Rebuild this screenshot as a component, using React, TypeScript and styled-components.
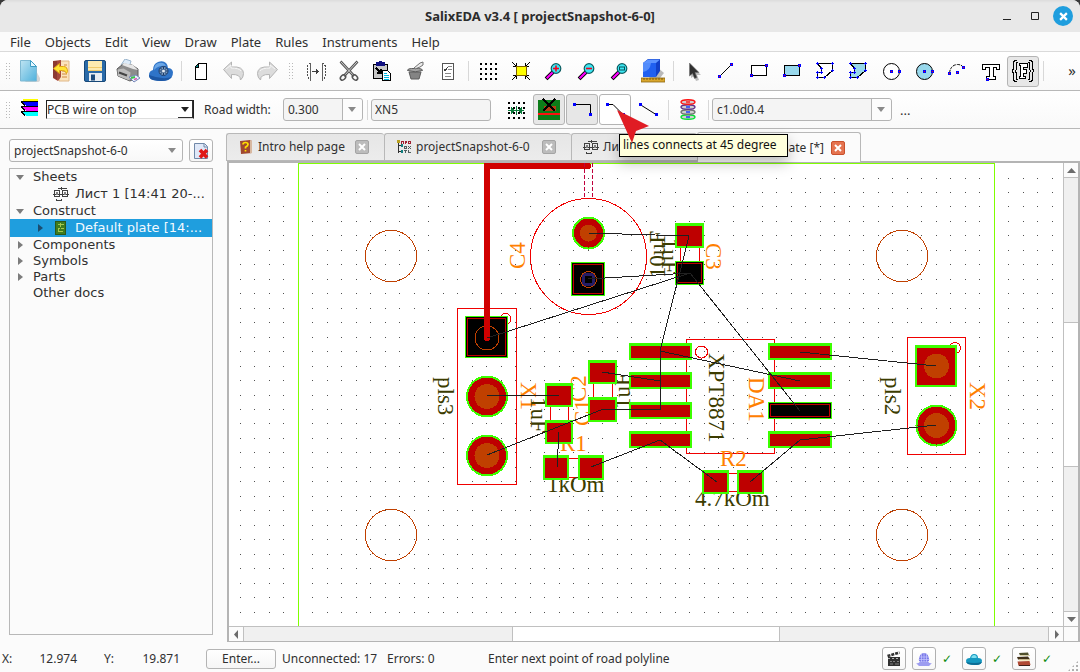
import React from 'react';
import styled, { createGlobalStyle, css } from 'styled-components';

const Global = createGlobalStyle`
  *, *::before, *::after { box-sizing: border-box; }
  html, body, #root { height: 100%; }
  body { margin: 0; background: #3a3a3a; overflow: hidden; }
  button, input, select { font: inherit; color: inherit; margin: 0; }
`;

const uiFont = '"Noto Sans", "Open Sans", sans-serif';
const treeFont = '"DejaVu Sans", sans-serif';

/* ---------- window frame ---------- */

const Window = styled.div`
  display: flex;
  flex-direction: column;
  height: 100vh;
  background: #fbfbfb;
  border-radius: 8px 8px 0 0;
  overflow: hidden;
  color: #303030;
  font: 12px/16px ${uiFont};
`;

const TitleBar = styled.header`
  display: grid;
  grid-template-columns: 1fr auto 1fr;
  align-items: center;
  height: 32px;
  flex: none;
  background: linear-gradient(#dcdcdc, #e8e8e8 3px);
`;

const Title = styled.h1`
  grid-column: 2;
  margin: 0;
  font-size: 13px;
  font-weight: 700;
  color: #2c2c2c;
`;

const WindowButtons = styled.div`
  display: flex;
  justify-content: flex-end;
  align-items: center;
  gap: 8px;
  padding-right: 7px;
`;

const WindowButton = styled.button<{ $close?: boolean }>`
  display: grid;
  place-items: center;
  width: 20px;
  height: 20px;
  padding: 0;
  border: 0;
  border-radius: 50%;
  background: ${p => (p.$close ? '#1f9ede' : 'transparent')};
`;

const MenuBar = styled.nav`
  display: flex;
  flex: none;
  height: 20px;
  padding: 0 3px;
  border-bottom: 1px solid #dadada;
`;

const MenuItem = styled.button`
  padding: 0 7px;
  border: 0;
  background: none;
  font-size: 13px;
  line-height: 18px;
`;

/* ---------- tool bars ---------- */

const ToolBar = styled.div<{ $height: number }>`
  display: flex;
  align-items: center;
  gap: 1px;
  flex: none;
  height: ${p => p.$height}px;
  padding-left: 5px;
  border-bottom: 1px solid #b8b8b8;
  background: linear-gradient(#ffffff, #f9f9f9);
`;

const Grip = styled.span<{ $inner?: boolean }>`
  width: 7px;
  height: 18px;
  margin: 0 ${p => (p.$inner ? 4 : 0)}px;
  flex: none;
  background: radial-gradient(circle, #b9b9b9 1px, transparent 1px) 0 0 / 3px 3px;
  background-size: 3px 3px;
  border-right: 2px solid transparent;
  background-clip: padding-box;
`;

const Separator = styled.span`
  width: 1px;
  height: 20px;
  margin: 0 2px 0 3px;
  flex: none;
  background: #d8d8d8;
`;

const ToolButton = styled.button<{ $state?: 'on' | 'hover' }>`
  position: relative;
  display: grid;
  place-items: center;
  flex: none;
  width: 32px;
  height: 31px;
  padding: 0;
  border: 1px solid transparent;
  border-radius: 3px;
  background: transparent;
  ${p => p.$state === 'on' && css`border-color: #b4b4b4; background: #e7e7e7;`}
  ${p => p.$state === 'hover' && css`border-color: #b4b4b4; background: #ffffff;`}
`;

const Overflow = styled.button`
  margin: 0 4px 3px auto;
  padding: 0;
  border: 0;
  background: none;
  font-size: 15px;
`;

const FieldLabel = styled.label`
  width: 87px;
  padding-left: 9px;
  flex: none;
  white-space: nowrap;
`;

const SelectBox = styled.span<{ $width?: number; $split?: boolean }>`
  position: relative;
  display: flex;
  height: 23px;
  flex: ${p => (p.$width ? 'none' : '1')};
  width: ${p => (p.$width ? `${p.$width}px` : 'auto')};
  border: 1px solid #b4b4b4;
  border-radius: 3px;
  background: ${p => (p.$split ? '#f4f4f4' : 'linear-gradient(#ffffff, #f8f8f8)')};
  select {
    flex: 1;
    min-width: 0;
    padding: 0 22px 0 4px;
    border: 0;
    appearance: none;
    background: none;
  }
  &::after {
    content: '';
    position: absolute;
    right: 6px;
    top: 8px;
    border: 4px solid transparent;
    border-top: 5px solid #8a8a8a;
    border-bottom: 0;
    pointer-events: none;
  }
  &::before {
    content: '';
    position: absolute;
    inset: 0 0 0 auto;
    width: 20px;
    border-left: 1px solid ${p => (p.$split ? '#b4b4b4' : 'transparent')};
    background: ${p => (p.$split ? '#fcfcfc' : 'transparent')};
    border-radius: 0 3px 3px 0;
    pointer-events: none;
  }
`;

const LayerSelect = styled.span`
  position: relative;
  display: flex;
  width: 148px;
  height: 19px;
  flex: none;
  border: 1px solid #202020;
  border-bottom-color: #dedede;
  background: #ffffff;
  select {
    flex: 1;
    min-width: 0;
    padding: 0 16px 0 0;
    border: 0;
    appearance: none;
    background: none;
  }
  &::before {
    content: '';
    position: absolute;
    inset: 0 0 0 auto;
    width: 15px;
    border: solid #303030;
    border-width: 0 1px 1px 0;
    pointer-events: none;
  }
  &::after {
    content: '';
    position: absolute;
    right: 4px;
    top: 6px;
    border: 4px solid transparent;
    border-top: 5px solid #202020;
    border-bottom: 0;
    pointer-events: none;
  }
`;

const TextField = styled.input`
  width: 120px;
  height: 22px;
  flex: none;
  && { margin-right: 8px; }
  padding: 0 3px;
  border: 1px solid #b4b4b4;
  border-radius: 3px;
  background: #f4f4f4;
`;

const Hint = styled.span`
  position: absolute;
  z-index: 5;
  left: 19px;
  top: 39px;
  width: 169px;
  padding: 1px 3px 2px;
  border: 1px solid #000000;
  background: #ffffdc;
  color: #101010;
  line-height: 18px;
  text-align: left;
  white-space: nowrap;
  box-shadow: 0 6px 14px rgba(0, 0, 0, 0.25);
`;

const Pointer = styled.svg`
  position: absolute;
  z-index: 6;
  left: 17px;
  top: 15px;
`;

/* ---------- work area ---------- */

const Work = styled.main`
  display: grid;
  grid-template-columns: 204px minmax(0, 1fr);
  column-gap: 14px;
  flex: 1;
  min-height: 0;
  padding: 3px 0 1px 9px;
`;

const SidePanel = styled.aside`
  display: flex;
  flex-direction: column;
  gap: 6px;
  min-height: 0;
  padding: 7px 0;
`;

const ProjectRow = styled.div`
  display: flex;
  gap: 6px;
`;

const CloseProject = styled.button`
  display: grid;
  place-items: center;
  width: 24px;
  height: 23px;
  padding: 0;
  border: 1px solid #b4b4b4;
  border-radius: 3px;
  background: linear-gradient(#ffffff, #f6f6f6);
`;

const Tree = styled.ul`
  flex: 1;
  margin: 0;
  padding: 0;
  list-style: none;
  border: 1px solid #b8b8b8;
  font: 13px/16px ${treeFont};
`;

const TreeRow = styled.li<{ $nested?: boolean; $selected?: boolean }>`
  display: flex;
  align-items: center;
  height: ${p => (p.$nested ? 18 : 16)}px;
  padding-left: ${p => (p.$nested ? 26 : 6)}px;
  white-space: nowrap;
  background: ${p => (p.$selected ? '#1f9ede' : 'transparent')};
  color: ${p => (p.$selected ? '#f4faff' : 'inherit')};
`;

const Arrow = styled.span<{ $dir?: 'down' | 'right'; $dark?: boolean }>`
  width: 8px;
  margin-right: 9px;
  display: flex;
  justify-content: center;
  &::before {
    content: '';
    border: 4px solid transparent;
    ${p => p.$dir === 'down' && css`border-top: 5px solid #7c7c7c; border-bottom: 0;`}
    ${p => p.$dir === 'right' && css`border-left: 5px solid ${p.$dark ? '#1b4d70' : '#7c7c7c'}; border-right: 0;`}
  }
`;

const TreeIcon = styled.span`
  display: flex;
  width: 22px;
`;

const DocArea = styled.section`
  display: flex;
  flex-direction: column;
  min-width: 0;
  min-height: 0;
`;

const Tabs = styled.div`
  display: flex;
  align-items: flex-end;
  flex: none;
  height: 29px;
  margin-left: -1px;
`;

const Tab = styled.div<{ $width: number; $active?: boolean }>`
  display: flex;
  align-items: center;
  width: ${p => p.$width}px;
  height: ${p => (p.$active ? 30 : 28)}px;
  margin-bottom: ${p => (p.$active ? -1 : 0)}px;
  padding: 0 15px 0 11px;
  border: 1px solid #b8b8b8;
  border-bottom-width: ${p => (p.$active ? 0 : 1)}px;
  border-right-width: ${p => (p.$active ? 1 : 0)}px;
  border-radius: 3px 3px 0 0;
  background: ${p => (p.$active ? '#fbfbfb' : 'linear-gradient(#e6e6e6, #ececec)')};
  ${p => p.$active && 'z-index: 1;'}
`;

const TabLabel = styled.button`
  display: flex;
  align-items: center;
  gap: 4px;
  flex: 1;
  min-width: 0;
  padding: 0;
  border: 0;
  background: none;
  white-space: nowrap;
  overflow: hidden;
`;

const TabTail = styled.span`
  flex: 1;
  text-align: right;
  padding-right: 7px;
`;

const TabClose = styled.button<{ $active?: boolean }>`
  display: grid;
  place-items: center;
  width: 14px;
  height: 14px;
  padding: 0;
  flex: none;
  border: 1px solid ${p => (p.$active ? '#c9502c' : '#a4a4a4')};
  border-radius: 2px;
  background: ${p => (p.$active ? '#e5734f' : '#bcbcbc')};
`;

const CanvasFrame = styled.div`
  display: grid;
  grid-template-columns: minmax(0, 1fr) 15px;
  grid-template-rows: minmax(0, 1fr) 15px;
  flex: 1;
  min-height: 0;
  border: solid #b4b4b4;
  border-width: 2px 2px 1px 2px;
  background: #ffffff;
`;

const Viewport = styled.svg`
  display: block;
  width: 100%;
  height: 100%;
  overflow: hidden;
`;

const ScrollBar = styled.div<{ $axis: 'x' | 'y' }>`
  display: flex;
  flex-direction: ${p => (p.$axis === 'y' ? 'column' : 'row')};
  border: solid #c0c0c0;
  border-width: ${p => (p.$axis === 'y' ? '0 0 0 1px' : '1px 0 0 0')};
  background: #f0f0f0;
`;

const ScrollArrow = styled.button`
  display: grid;
  place-items: center;
  flex: none;
  width: 14px;
  height: 14px;
  padding: 0;
  border: 0;
  background: #fcfcfc;
`;

const Track = styled.div<{ $axis: 'x' | 'y' }>`
  display: grid;
  flex: 1;
  border: solid #c0c0c0;
  border-width: ${p => (p.$axis === 'y' ? '1px 0' : '0 1px')};
  ${p => (p.$axis === 'y'
    ? 'grid-template-rows: repeat(3, 1fr);'
    : 'grid-template-columns: repeat(3, 1fr);')}
`;

const Thumb = styled.div<{ $axis: 'x' | 'y' }>`
  background: #ffffff;
  border: solid #c0c0c0;
  border-width: ${p => (p.$axis === 'y' ? '1px 0' : '0 1px')};
  ${p => (p.$axis === 'y' ? 'grid-row: 2;' : 'grid-column: 2;')}
`;

const Corner = styled.div`
  border: solid #c0c0c0;
  border-width: 1px 0 0 1px;
  background: #fbfbfb;
`;

/* ---------- status bar ---------- */

const StatusBar = styled.footer`
  display: flex;
  align-items: center;
  flex: none;
  height: 29px;
  padding: 2px 1px 0 2px;
  white-space: nowrap;
`;

const Coord = styled.span<{ $width: number; $right?: boolean }>`
  width: ${p => p.$width}px;
  flex: none;
  text-align: ${p => (p.$right ? 'right' : 'left')};
`;

const EnterButton = styled.button`
  width: 70px;
  height: 20px;
  && { margin: 0 6px 0 26px; }
  padding: 0;
  flex: none;
  border: 1px solid #b4b4b4;
  border-radius: 3px;
  background: linear-gradient(#ffffff, #f6f6f6);
  line-height: 16px;
`;

const Message = styled.span<{ $width?: number }>`
  flex: ${p => (p.$width ? 'none' : '1')};
  width: ${p => (p.$width ? `${p.$width}px` : 'auto')};
`;

const StatusButton = styled.button`
  display: grid;
  place-items: center;
  width: 24px;
  height: 23px;
  && { margin-left: 6px; }
  padding: 0;
  flex: none;
  border: 1px solid #b0b0b0;
  border-radius: 3px;
  background: linear-gradient(#ffffff, #f8f8f8);
`;

const Check = styled.span`
  width: 20px;
  padding-left: 6px;
  flex: none;
  color: #0a8a0a;
  font: 12px/16px ${treeFont};
`;

const SizeGrip = styled.span`
  align-self: flex-end;
  width: 12px;
  height: 12px;
  margin-left: 11px;
  flex: none;
  background: radial-gradient(circle, #b0b0b0 1px, transparent 1px) 0 0 / 4px 4px;
  clip-path: polygon(100% 0, 100% 100%, 0 100%);
`;

/* ---------- icons ---------- */

type IconProps = { children: React.ReactNode; size?: number; crisp?: boolean };
const Icon = ({ children, size = 24, crisp }: IconProps) => (
  <svg width={size} height={size} viewBox={`0 0 ${size} ${size}`} fill="none" aria-hidden="true"
    shapeRendering={crisp ? 'crispEdges' : 'auto'}>{children}</svg>
);

const Nodes = ({ at, red }: { at: number[][]; red?: boolean }) => (
  <>
    {at.map(([x, y]) => (
      <g key={`${x}-${y}`}>
        <rect x={x - 1} y={y - 1} width="3" height="3" fill="#0000ff" />
        {red && <rect x={x} y={y} width="1" height="1" fill="#ff0000" />}
      </g>
    ))}
  </>
);

const NewIcon = () => (
  <Icon>
    <path d="M18 10l5 9v2q0 2-3 2H8z" fill="#000" opacity=".15" />
    <path d="M3.500 1.500h10l6 6v14.500h-16z" fill="url(#newdoc)" stroke="#7fb9d3" />
    <path d="M13.500 1.500v6h6z" fill="#e6f7ff" stroke="#3b9cc4" />
    <defs><linearGradient id="newdoc" x1="0" y1="0" x2="1" y2="1"><stop stopColor="#bfe4f2" /><stop offset="1" stopColor="#4fb1dc" /></linearGradient></defs>
  </Icon>
);
const OpenIcon = () => (
  <Icon>
    <path d="M9 2h10v20H9z" fill="#fbe3bd" stroke="#e0b888" />
    <path d="M14 6h3M14 9h3M12 12h5M12 15h5M12 18h5" stroke="#d08a3c" />
    <path d="M3 2l8-1v17l-3 4-5-3z" fill="#a5483c" />
    <path d="M3 2h4v19l-4-3z" fill="#8c3a32" />
    <path d="M3.500 9.500l6-5v3h4q4 0 4 5l-1 2q-1-3-4-3h-3v3z" fill="#ffe436" stroke="#e0a414" />
  </Icon>
);
const SaveIcon = () => (
  <Icon>
    <rect x="1.500" y="1.500" width="21" height="21" rx="1.500" fill="#2a6aa8" stroke="#174878" />
    <rect x="5" y="2" width="14" height="10" fill="#fdebb0" />
    <path d="M5 8.500h14M5 11.500h14" stroke="#f0cb6c" />
    <rect x="6" y="14" width="13" height="8" fill="#e8eef3" />
    <rect x="8" y="15.500" width="4" height="6" fill="#1c4b7c" />
  </Icon>
);
const PrintIcon = () => (
  <Icon>
    <path d="M5 6L9 0l6 2-2 7z" fill="#dcebf9" stroke="#9ab4cc" />
    <path d="M1 10l6-5 9 1 6 4v8l-8 4L2 17z" fill="#8c8c8c" stroke="#585858" />
    <path d="M1.500 10.500l6-1 7 4-1 8L2 17z" fill="#bcbcbc" />
    <path d="M6 6l11 4 5 1-5-5-9-2z" fill="#e6e6e6" />
    <path d="M3 13.500l8 3" stroke="#444" strokeWidth="2" />
    <path d="M13 18l7-2 4 3-6 4z" fill="#e8f1ff" stroke="#7788b8" />
    <path d="M15 19l4-1" stroke="#3cc24a" strokeWidth="2" /><path d="M18 20.500l3-1" stroke="#d95ab0" strokeWidth="1.500" />
  </Icon>
);
const CloudIcon = () => (
  <Icon>
    <path d="M4 21q-4-1-4-5 0-4 4-5 0-6 5-8 5-2 8 1 2 2 2 5 4 0 5 4 0 6-5 8-6 2-15 0z" fill="#2f74c8" />
    <path d="M5 11q0-6 5-7 5-1 7 3-7-1-12 4z" fill="#6aa6e6" />
    <path d="M0 16q0 4 4 5 9 2 15 0l4-3q-10 3-23-2z" fill="#1d57a4" />
    <circle cx="14.500" cy="12" r="4.500" fill="#7c9cc0" stroke="#1a3c6c" />
    <path d="M14.500 8v8M10.500 12h8M11.500 9l6 6M17.500 9l-6 6" stroke="#1a3c6c" />
    <circle cx="14.500" cy="12" r="1.500" fill="#e6edf4" />
  </Icon>
);
const PageIcon = () => (
  <Icon crisp>
    <path d="M9.500 4.500h8v16h-11v-13z" fill="#fff" stroke="#000" />
    <path d="M7 7l3-3v4H7z" fill="#008080" />
    <path d="M6.500 8.500h3v-4" stroke="#000" />
  </Icon>
);
const UndoIcon = ({ flip }: { flip?: boolean }) => (
  <Icon>
    <g transform={flip ? 'translate(24 0) scale(-1 1)' : undefined}>
      <path d="M1.500 10.500l8-7.500v5q12-1 12 6.500 0 4-3 6.500 0-6-9-5.500v4z" fill="#dcdcdc" stroke="#b4b4b4" strokeLinejoin="round" />
      <path d="M4 10l5-4v3q8 0 10 3" stroke="#f6f6f6" />
    </g>
  </Icon>
);
const MirrorIcon = () => (
  <Icon crisp>
    <path d="M6.500 3.500v18M18.500 3.500v18" stroke="#606060" />
    <path d="M6 4q-3 2-3 8t3 9M19 4q3 2 3 8t-3 9" stroke="#505050" strokeDasharray="2 1" />
    <path d="M8 12.500h7M12.500 10v5M13.500 11v3" stroke="#404040" />
  </Icon>
);
const CutIcon = () => (
  <Icon>
    <path d="M3.500 2.500L17 17M20.500 2.500L7 17" stroke="#555" strokeWidth="2.600" />
    <path d="M4 3l13 14M20 3L7 17" stroke="#eee" strokeWidth=".8" />
    <ellipse cx="6" cy="18.500" rx="3" ry="2.200" transform="rotate(-45 6 18.500)" stroke="#555" strokeWidth="1.500" />
    <ellipse cx="18" cy="18.500" rx="3" ry="2.200" transform="rotate(45 18 18.500)" stroke="#555" strokeWidth="1.500" />
  </Icon>
);
const PasteIcon = () => (
  <Icon crisp>
    <rect x="3.500" y="5.500" width="14" height="14" fill="#c8c8c8" stroke="#000" />
    <path d="M6 3h9v4H6z" fill="#101080" /><path d="M9 2h3v2H9z" fill="#101080" />
    <path d="M6 9l5 5M11 10v4H7" stroke="#000" strokeWidth="1.500" />
    <path d="M12.500 11.500h5l3 3v7h-8z" fill="#fff" stroke="#000" />
    <path d="M14 14h3M14 16h5M14 18h5M14 20h5" stroke="#00b8e0" />
  </Icon>
);
const BucketIcon = () => (
  <Icon>
    <path d="M6 13h12l-2 7H8z" fill="#848484" stroke="#5c5c5c" />
    <path d="M4.500 11.500q0-2 4-2h7q4 0 4 2-7 2.500-15 0z" fill="#a4a4a4" stroke="#5c5c5c" />
    <path d="M11 9l6-5 3-1v3l-3 2-5 2z" fill="#ececec" stroke="#707070" />
  </Icon>
);
const ListIcon = () => (
  <Icon crisp>
    <rect x="6.500" y="4.500" width="11" height="16" fill="#fff" stroke="#555" />
    <path d="M12 7.500h4M12 10.500h4M9 17.500h6M9 14.500h6" stroke="#888" />
    <path d="M8 10l1 2 3-4" stroke="#404040" />
  </Icon>
);
const GridIcon = () => (
  <Icon crisp>
    {[0, 1, 2, 3].flatMap(r => [0, 1, 2, 3].map(c => (
      <rect key={`${r}${c}`} x={4 + c * 5} y={4 + r * 5} width="2" height="2" fill="#000" />
    )))}
  </Icon>
);
const FitIcon = () => (
  <Icon crisp>
    <path d="M3 3l4 4M21 3l-4 4M3 21l4-4M21 21l-4-4M4 7.500h3.500V4M20 7.500h-3.500V4M4 16.500h3.500v3.500M20 16.500h-3.500v3.500" stroke="#000" />
    <rect x="7.500" y="7.500" width="10" height="9" fill="#ffff00" stroke="#806000" />
  </Icon>
);
const ZoomIcon = ({ kind }: { kind: 'in' | 'out' | 'box' }) => (
  <Icon>
    <path d="M5.500 18.500l6-6" stroke="#000" strokeWidth="4" strokeLinecap="square" />
    <path d="M5.500 18.500l5.500-5.500" stroke="#ff00ff" strokeWidth="2.200" strokeLinecap="square" />
    <circle cx="14" cy="9.500" r="4.800" fill="#3ce8f4" stroke="#0c5c60" strokeWidth="1.200" />
    {kind !== 'box' && <path d="M11 9.500h6" stroke="#f00020" strokeWidth="1.600" />}
    {kind === 'in' && <path d="M14 6.500v6" stroke="#f00020" strokeWidth="1.600" />}
    {kind === 'box' && <rect x="11.500" y="8" width="5" height="3" stroke="#085058" />}
  </Icon>
);
const CubeIcon = () => (
  <Icon>
    <path d="M16 8l7 6-4 5H8z" fill="#8c8c8c" opacity=".6" />
    <path d="M2 4l5-4h12v12l-4 6H2z" fill="#1240c8" />
    <path d="M2 4l5-3.500h12L15 4z" fill="#5c94ff" />
    <path d="M2 4h13v14H2z" fill="#2060f0" />
    <path d="M2 4h8q-1 8-8 9z" fill="#6aa0ff" opacity=".7" />
    <path d="M0 19h24v4H0z" fill="#d9a62c" stroke="#8a6410" strokeWidth=".8" />
    <path d="M3 19v2M6 19v2M9 19v2M12 19v2M15 19v2M18 19v2M21 19v2" stroke="#6b4c08" strokeWidth=".8" />
  </Icon>
);
const CursorIcon = () => (
  <Icon>
    <path d="M10 6v13l3-2 2 5 3-1-2-5h4z" fill="#000" opacity=".25" />
    <path d="M8.500 4v13l3-2.500 2 5 2.500-1-2-5h4z" fill="#303030" stroke="#707070" strokeWidth=".6" />
  </Icon>
);
const LineIcon = () => (
  <Icon><path d="M5.500 17.500l12-12" stroke="#000" /><Nodes red at={[[5, 17], [17, 5]]} /></Icon>
);
const RectIcon = ({ fill }: { fill?: string }) => (
  <Icon crisp><rect x="4.500" y="6.500" width="15" height="10" fill={fill ?? '#fff'} stroke="#000" /><Nodes red at={[[4, 16], [19, 6]]} /></Icon>
);
const PolyIcon = ({ fill }: { fill?: string }) => (
  <Icon crisp>
    <path d="M4.500 4.500h15v7l-8 7h-7v-5h4v-4z" fill={fill ?? '#fff'} stroke="#000" />
    {[[4, 4], [19, 4], [19, 11], [11, 18], [4, 18], [4, 13], [8, 13], [8, 9]].map(([x, y]) => (
      <path key={`${x}-${y}`} d={`M${x - 1} ${y}h3v1h-3zM${x} ${y - 1}h1v3h-1z`} fill="#0000ff" />
    ))}
  </Icon>
);
const CircleIcon = ({ fill }: { fill?: string }) => (
  <Icon><circle cx="12.500" cy="12.500" r="8" fill={fill ?? '#fff'} stroke="#000" /><Nodes red at={[[12, 12], [20, 12]]} /></Icon>
);
const ArcIcon = () => (
  <Icon><path d="M4.500 14q1-8 8-8.500 4 0 6 3" stroke="#000" strokeDasharray="3 1" /><Nodes red at={[[4, 14], [12, 13], [18, 8]]} /></Icon>
);
const TypeIcon = () => (
  <Icon crisp>
    <path d="M4.500 5.500h17v5h-3v-2h-3.500v9h2.500v3h-9v-3h2.500v-9h-3.500v2h-3z" fill="#fff" stroke="#000" />
    <Nodes red at={[[9, 20]]} />
  </Icon>
);
const FrameTypeIcon = () => (
  <Icon crisp>
    <path d="M6 1.500H4L2.500 3v7L1 12l1.500 2v7L4 22.500h2M18 1.500h2L21.500 3v7L23 12l-1.500 2v7L20 22.500h-2" stroke="#000" />
    <path d="M7 3.500H5.500v7L4 12l1.500 2v6.500H7M17 3.500h1.500v7L20 12l-1.500 2v6.500H17" stroke="#000" />
    <path d="M8.500 4.500h8v4h-4v2h3v4h-3v3h1.500v2H8.500v-2h1v-11h-1z" fill="#fff" stroke="#000" />
  </Icon>
);
const LayersIcon = () => (
  <Icon crisp>
    <path d="M6 1h15v2H6z" fill="#ffff00" />
    {['#0000ff', '#ff00ff', '#00ffff'].map((c, i) => (
      <g key={c}>
        <path d={`M4 ${3 + i * 5}h17v5H9z`} fill={c} />
        <path d={`M4 ${3.5 + i * 5}h17M4 ${3.5 + i * 5}l4 4`} stroke="#000" />
      </g>
    ))}
  </Icon>
);
const PackIcon = () => (
  <Icon crisp>
    {[0, 1, 2, 3].flatMap(r => [0, 1, 2, 3].map(c => (
      <rect key={`${r}${c}`} x={4 + c * 5} y={4 + r * 5} width="2" height="2" fill="#000" />
    )))}
    <path d="M4 12.500h16M12.500 8v9" stroke="#0a7a3a" strokeWidth="1.500" />
    <path d="M7 8l4 4.500L7 17zM18 8l-4 4.500 4 4.500z" fill="#0a7a3a" />
  </Icon>
);
const ClearIcon = () => (
  <Icon crisp>
    <rect x="1" y="2" width="22" height="20" fill="#0c7c18" />
    <rect x="7" y="8" width="12" height="5" fill="#b43c14" />
    <path d="M1 16h22" stroke="#ff1010" strokeWidth="2" />
    <path d="M6 1l12 12M18 1L6 13" stroke="#000" strokeWidth="2" />
  </Icon>
);
const roadShapes = { right: 'M4 6.500h16.500v10', slope: 'M4 6.500h6l10 10', free: 'M4 6.500l16 10' };
const RoadIcon = ({ kind }: { kind: keyof typeof roadShapes }) => (
  <Icon>
    <path d={roadShapes[kind]} stroke="#000" />
    <Nodes at={[[4, 6], [20, 16]]} />
  </Icon>
);
const ViaIcon = () => (
  <Icon>
    {['#00e030', '#707070', '#60308c', '#ff1010'].map((c, i) => (
      <g key={c}>
        <ellipse cx="12" cy={19 - i * 5} rx="7" ry="2.300" fill="#d0d0d0" stroke={c} strokeWidth="1.400" />
        <path d={`M10 ${19 - i * 5}h4`} stroke={i === 3 ? '#ff1010' : '#1030ff'} strokeWidth="1.400" />
      </g>
    ))}
  </Icon>
);
const SchemaIcon = () => (
  <Icon size={16} crisp>
    <path d="M1.500 4.500h5v6h-5zM9.500 4.500h5v6h-5zM4.500 2.500h9M8.500 1v3M3.500 12.500v2h5v-2M0 8.500h16" stroke="#404040" />
    <path d="M3 6h2v3H3zM11 6h2v3h-2z" fill="#808080" />
  </Icon>
);
const PlateIcon = () => (
  <Icon size={16} crisp>
    <rect x="2.500" y="1.500" width="10" height="13" fill="#3e7c20" stroke="#2c5818" />
    <path d="M5 4.500h2M8 4.500h3M5 8.500h2M8 8.500h3M5 11.500h5M7.500 3v4M5.500 8v4" stroke="#a4c850" />
  </Icon>
);
const HelpIcon = () => (
  <Icon size={16}>
    <path d="M2 2l10-1 2 1v12l-11 1z" fill="#a04830" />
    <path d="M12 1l2 1v12l-2 .5z" fill="#d8b8a0" />
    <path d="M5 5.500q0-2 2.500-2t2.500 2q0 1.200-2.500 2.700v1.300M7.500 11v1.600" stroke="#ffe000" strokeWidth="1.700" />
  </Icon>
);
const ProjectIcon = () => (
  <Icon size={16} crisp>
    <path d="M2.500 3v11M2 6.500h3M2 12.500h3" stroke="#303030" />
    <rect x="1" y="1" width="3" height="3" fill="#b8a020" />
    <path d="M5.500 5V2.500h2V5M9.500 5V2.500h1V4M12.500 2.500h2v2h-2z" stroke="#a02030" />
    <path d="M5 5h2v3H5zM5 11h2v3H5z" fill="#108080" />
    <path d="M8.500 7.500h2v2h-2zM12 7l3 3M15 7l-3 3M9.500 11v3M8 11.500h3M12.500 11v3M12 13.500h3" stroke="#506060" />
  </Icon>
);
const RemoveIcon = () => (
  <Icon size={20}>
    <path d="M3.500 2.500h10l3 3v12h-13z" fill="#dfe8f8" stroke="#7088a8" />
    <path d="M13 3v3h3" stroke="#7088a8" />
    <path d="M9 9l7 7.500M16 9l-7 7.500" stroke="#e01818" strokeWidth="3.600" />
  </Icon>
);
const Cross = ({ color = '#ffffff', size = 8 }: { color?: string; size?: number }) => (
  <svg width={size} height={size} viewBox="0 0 8 8" aria-hidden="true">
    <path d="M1 1l6 6M7 1l-6 6" stroke={color} strokeWidth="2" />
  </svg>
);
const FilmIcon = () => (
  <Icon size={16}>
    <path d="M2 6h12v9H2z" fill="#303030" /><path d="M1.500 5l12-3.500" stroke="#303030" strokeWidth="2.600" strokeDasharray="3 1" />
    <path d="M2 7.500h12" stroke="#b0b0b0" strokeDasharray="2 2" /><path d="M4 10.500h2M7 10.500h2M11 10.500h2M4 13h3M9 13h4" stroke="#808080" />
  </Icon>
);
const GlobeIcon = () => (
  <Icon size={16}>
    <path d="M3 10q0-8 5-8t5 8z" fill="#7a7ae8" /><path d="M0 12q3 1 4-2h8q1 3 4 2l-3 3H3z" fill="#9c9cf0" />
    <path d="M3 6h10M2.500 8.500h11M8 2v9M5.500 3v8M10.500 3v8" stroke="#c8c8ff" strokeWidth=".7" />
  </Icon>
);
const BlueCloudIcon = () => (
  <Icon size={16}>
    <path d="M2 13q-2-1-2-3 0-3 4-3 1-4 4-4 4 0 4 4 4 0 4 3 0 2-2 3-5 2-12 0z" fill="#1498c0" />
    <path d="M5 6.500q1-3 3.500-2.500 2 0 2.500 2.500-3 1-6 0z" fill="#7fe0f0" />
    <path d="M0 11q8 2 16 0-1 2-3 2.700-6 1-11-.7z" fill="#0c6c94" />
  </Icon>
);
const BooksIcon = () => (
  <Icon size={16}>
    <path d="M3 2l9-.5 1 3H4z" fill="#50502c" /><path d="M4 4.500h10" stroke="#d8d0a8" />
    <path d="M1 6l11-.5 2 3H2z" fill="#403018" /><path d="M3 9h11" stroke="#f0d890" />
    <path d="M1.500 10.500l12-.5 1 4-12 .8z" fill="#b04a34" /><path d="M3 14.500h11" stroke="#402018" />
  </Icon>
);
const Triangle = ({ d }: { d: string }) => (
  <svg width="9" height="9" viewBox="0 0 9 9" aria-hidden="true"><path d={d} fill="#6c6c6c" /></svg>
);

/* ---------- printed circuit board ---------- */

const LIME = '#3cff00';
const COPPER = '#be0000';
const HOLE = '#c04000';

const BoardText = styled.text`
  font-family: 'Liberation Serif', serif;
  font-size: 23px;
`;

const gridPath = Array.from({ length: 32 }, (_, r) =>
  Array.from({ length: 57 }, (_, c) =>
    `M${Math.floor(240 + c * 14.5)} ${Math.floor(178 + r * 14.467)}h1v1h-1z`).join('')).join('');

const Pad = ({ x, y, w, h }: { x: number; y: number; w: number; h: number }) => (
  <g>
    <rect x={x} y={y} width={w} height={h} fill={LIME} />
    <rect x={x + 2} y={y + 3} width={w - 4} height={h - 5} fill={COPPER} />
  </g>
);

const DarkPad = ({ x, y, w, h }: { x: number; y: number; w: number; h: number }) => (
  <g>
    <rect x={x + 0.5} y={y + 0.5} width={w - 1} height={h - 1} fill="#000" stroke={LIME} />
    <rect x={x + 2.5} y={y + 2.5} width={w - 5} height={h - 5} stroke="#c00000" fill="none" />
  </g>
);

const RoundPad = ({ x, y, r }: { x: number; y: number; r: number }) => (
  <g>
    <circle cx={x} cy={y} r={r} fill={LIME} />
    <circle cx={x} cy={y} r={r - 2} fill={COPPER} />
    <circle cx={x} cy={y} r={r > 18 ? 12.5 : 8.5} fill={HOLE} />
  </g>
);

const Label = ({ x, y, turn = 0, value, children }: {
  x: number; y: number; turn?: number; value?: boolean; children: string;
}) => (
  <BoardText transform={`translate(${x} ${y}) rotate(${turn})`} fill={value ? '#3c3c00' : '#ff8000'}>{children}</BoardText>
);

const wires = [
  'M588 233L689 236', 'M689 236L660 351V410', 'M588 279L690 273', 'M690 273L487 338', 'M690 273L800 411',
  'M660 351L800 381', 'M800 352L936 366', 'M800 440L936 425', 'M602 372L660 381', 'M487 395.500H559',
  'M559 432L557 467', 'M487 455L602 409.500H660', 'M591 467L660 440L717 482', 'M750 482L800 440',
];

const Board = () => (
  <Viewport role="img" aria-label="Default plate">
    <g transform="translate(-229 -163)" shapeRendering="crispEdges">
      <path d={gridPath} fill="#505050" />
      <path d="M298.500 660V163.500H994.500V660" stroke="#80ff00" fill="none" />
      {[[391, 256], [902, 256], [391, 535], [902, 535]].map(([x, y]) => (
        <circle key={`${x}-${y}`} cx={x} cy={y} r="25.700" stroke={HOLE} fill="none" />
      ))}

      <g stroke="#f00000" fill="none">
        <circle cx="588.500" cy="256.500" r="58" />
        <path d="M680.500 247v15M699.500 247v15M550.500 406v14M568.500 406v14M593.500 383v15M612.500 383v15" />
        <path d="M568 458.500h11M568 477.500h11M728 473.500h11M728 491.500h11" />
        <path d="M457.500 308.500h59v176h-59zM686.500 339.500h88v114h-88zM907.500 337.500h58v117h-58z" />
        <circle cx="505.500" cy="319" r="5.500" />
        <circle cx="701.500" cy="352" r="6" />
        <circle cx="955" cy="348" r="5.500" />
      </g>

      <Label x={525} y={269} turn={-90}>C4</Label>
      <Label x={706} y={243} turn={90}>C3</Label>
      <Label x={665} y={278} turn={-90} value>10uF</Label>
      <Label x={662} y={238} turn={90} value>1uF</Label>
      <Label x={438} y={377} turn={90} value>pls3</Label>
      <Label x={521} y={382} turn={90}>X1</Label>
      <Label x={531} y={397} turn={90} value>1uF</Label>
      <Label x={586} y={402} turn={-90}>C2</Label>
      <Label x={590} y={426} turn={-90}>C1</Label>
      <Label x={630} y={409} turn={-90} value>1uF</Label>
      <Label x={560} y={451}>R1</Label>
      <Label x={547} y={492} value>1kOm</Label>
      <Label x={720} y={466}>R2</Label>
      <Label x={695} y={506} value>4.7kOm</Label>
      <Label x={709} y={353} turn={90} value>XPT8871</Label>
      <Label x={749} y={377} turn={90}>DA1</Label>
      <Label x={885} y={377} turn={90} value>pls2</Label>
      <Label x={970} y={382} turn={90}>X2</Label>

      <RoundPad x={588.5} y={233} r={16.5} />
      <DarkPad x={571} y={262} w={34} h={34} />
      <rect x="583.500" y="274.500" width="10" height="10" stroke="#241c64" strokeWidth="3" fill="#000" />
      <circle cx="588.500" cy="279.500" r="8" stroke={HOLE} fill="none" />
      <Pad x={675} y={223} w={29} h={25} />
      <DarkPad x={675} y={261} w={29} h={24} />

      <DarkPad x={465} y={316} w={43} h={42} />
      <circle cx="487" cy="338" r="12" stroke={HOLE} fill="none" />
      <RoundPad x={487} y={396.5} r={21} />
      <RoundPad x={487} y={455.5} r={21} />

      <Pad x={545} y={383} w={28} h={24} />
      <Pad x={545} y={420} w={28} h={24} />
      <Pad x={588} y={360} w={29} h={24} />
      <Pad x={588} y={397} w={29} h={25} />
      <Pad x={543} y={455} w={26} h={25} />
      <Pad x={578} y={455} w={26} h={25} />
      <Pad x={702} y={470} w={27} h={24} />
      <Pad x={737} y={470} w={27} h={24} />

      {[343, 372, 402, 431].map(y => <Pad key={y} x={629} y={y} w={63} h={17} />)}
      {[343, 372, 431].map(y => <Pad key={y} x={768} y={y} w={64} h={17} />)}
      <DarkPad x={768} y={402} w={64} h={17} />

      <Pad x={915} y={345} w={42} h={42} />
      <circle cx="936.500" cy="366" r="12.500" fill={HOLE} />
      <RoundPad x={936.5} y={425.5} r={21} />

      <path d="M487 338V166H588" stroke="#d00000" strokeWidth="6" strokeLinecap="round" fill="none" />
      <path d="M584.500 163v34M592.500 163v34" stroke="#c0003c" strokeDasharray="4 2" />
      <path d={wires.join('')} stroke="#202020" fill="none" />
    </g>
  </Viewport>
);

/* ---------- page ---------- */

const menus = ['File', 'Objects', 'Edit', 'View', 'Draw', 'Plate', 'Rules', 'Instruments', 'Help'];

const Tool = ({ name, state, children }: { name: string; state?: 'on' | 'hover'; children: React.ReactNode }) => (
  <ToolButton aria-label={name} $state={state}>{children}</ToolButton>
);

export default function App() {
  return (
    <>
      <Global />
      <Window>
        <TitleBar>
          <Title>SalixEDA v3.4 [ projectSnapshot-6-0]</Title>
          <WindowButtons>
            <WindowButton aria-label="Minimize"><svg width="10" height="10"><path d="M1 8.500h8" stroke="#222" /></svg></WindowButton>
            <WindowButton aria-label="Maximize"><svg width="10" height="10"><path d="M1.500 1.500h7v7h-7z" stroke="#222" fill="none" /></svg></WindowButton>
            <WindowButton aria-label="Close" $close><Cross size={9} /></WindowButton>
          </WindowButtons>
        </TitleBar>

        <MenuBar>{menus.map(m => <MenuItem key={m}>{m}</MenuItem>)}</MenuBar>

        <ToolBar $height={39}>
          <Grip />
          <Tool name="New"><NewIcon /></Tool>
          <Tool name="Open"><OpenIcon /></Tool>
          <Tool name="Save"><SaveIcon /></Tool>
          <Tool name="Print"><PrintIcon /></Tool>
          <Tool name="Cloud"><CloudIcon /></Tool>
          <Separator />
          <Tool name="Page"><PageIcon /></Tool>
          <Tool name="Undo"><UndoIcon /></Tool>
          <Tool name="Redo"><UndoIcon flip /></Tool>
          <Grip $inner />
          <Tool name="Mirror"><MirrorIcon /></Tool>
          <Tool name="Cut"><CutIcon /></Tool>
          <Tool name="Paste"><PasteIcon /></Tool>
          <Tool name="Clean"><BucketIcon /></Tool>
          <Tool name="Properties"><ListIcon /></Tool>
          <Separator />
          <Tool name="Grid"><GridIcon /></Tool>
          <Tool name="Fit"><FitIcon /></Tool>
          <Tool name="Zoom in"><ZoomIcon kind="in" /></Tool>
          <Tool name="Zoom out"><ZoomIcon kind="out" /></Tool>
          <Tool name="Zoom window"><ZoomIcon kind="box" /></Tool>
          <Tool name="3D view"><CubeIcon /></Tool>
          <Separator />
          <Tool name="Select"><CursorIcon /></Tool>
          <Tool name="Line"><LineIcon /></Tool>
          <Tool name="Rectangle"><RectIcon /></Tool>
          <Tool name="Filled rectangle"><RectIcon fill="#98d8ec" /></Tool>
          <Tool name="Polygon"><PolyIcon /></Tool>
          <Tool name="Filled polygon"><PolyIcon fill="#98d8ec" /></Tool>
          <Tool name="Circle"><CircleIcon /></Tool>
          <Tool name="Filled circle"><CircleIcon fill="#98d8ec" /></Tool>
          <Tool name="Arc"><ArcIcon /></Tool>
          <Tool name="Text"><TypeIcon /></Tool>
          <Tool name="Text in frame" state="on"><FrameTypeIcon /></Tool>
          <Separator />
          <Overflow aria-label="More tools">»</Overflow>
        </ToolBar>

        <ToolBar $height={38}>
          <Grip />
          <Tool name="Layers"><LayersIcon /></Tool>
          <LayerSelect>
            <select aria-label="Layer" defaultValue="top"><option value="top">PCB wire on top</option></select>
          </LayerSelect>
          <FieldLabel htmlFor="road">Road width:</FieldLabel>
          <SelectBox $width={80} $split>
            <select id="road" defaultValue="0.300"><option>0.300</option></select>
          </SelectBox>
          <Separator />
          <TextField aria-label="Net name" defaultValue="XN5" />
          <Tool name="Pack"><PackIcon /></Tool>
          <Tool name="Clear road" state="on"><ClearIcon /></Tool>
          <Tool name="Right angle" state="on"><RoadIcon kind="right" /></Tool>
          <ToolButton aria-label="45 degree" $state="hover">
            <RoadIcon kind="slope" />
            <Hint role="tooltip">lines connects at 45 degree</Hint>
            <Pointer width="34" height="36" aria-hidden="true"><path d="M0 0l32 16-13 5-4 12z" fill="#e01c24" /></Pointer>
          </ToolButton>
          <Tool name="Any angle"><RoadIcon kind="free" /></Tool>
          <Separator />
          <Tool name="Via"><ViaIcon /></Tool>
          <Separator />
          <SelectBox $width={180} $split>
            <select aria-label="Via type" defaultValue="c1.0d0.4"><option>c1.0d0.4</option></select>
          </SelectBox>
          <MenuItem aria-label="More via types">...</MenuItem>
        </ToolBar>

        <Work>
          <SidePanel>
            <ProjectRow>
              <SelectBox>
                <select aria-label="Project" defaultValue="p"><option value="p">projectSnapshot-6-0</option></select>
              </SelectBox>
              <CloseProject aria-label="Close project"><RemoveIcon /></CloseProject>
            </ProjectRow>
            <Tree role="tree">
              <TreeRow role="treeitem"><Arrow $dir="down" />Sheets</TreeRow>
              <TreeRow role="treeitem" $nested><Arrow /><TreeIcon><SchemaIcon /></TreeIcon>Лист 1 [14:41 20-...</TreeRow>
              <TreeRow role="treeitem"><Arrow $dir="down" />Construct</TreeRow>
              <TreeRow role="treeitem" $nested $selected aria-selected="true"><Arrow $dir="right" $dark /><TreeIcon><PlateIcon /></TreeIcon>Default plate [14:...</TreeRow>
              <TreeRow role="treeitem"><Arrow $dir="right" />Components</TreeRow>
              <TreeRow role="treeitem"><Arrow $dir="right" />Symbols</TreeRow>
              <TreeRow role="treeitem"><Arrow $dir="right" />Parts</TreeRow>
              <TreeRow role="treeitem"><Arrow />Other docs</TreeRow>
            </Tree>
          </SidePanel>

          <DocArea>
            <Tabs>
              <Tab $width={158}><TabLabel><HelpIcon />Intro help page</TabLabel><TabClose aria-label="Close"><Cross /></TabClose></Tab>
              <Tab $width={187}><TabLabel><ProjectIcon />projectSnapshot-6-0</TabLabel><TabClose aria-label="Close"><Cross /></TabClose></Tab>
              <Tab $width={126}><TabLabel><SchemaIcon />Ли</TabLabel></Tab>
              <Tab $width={164} $active><TabLabel><TabTail>ate [*]</TabTail></TabLabel><TabClose aria-label="Close" $active><Cross /></TabClose></Tab>
            </Tabs>
            <CanvasFrame>
              <Board />
              <ScrollBar $axis="y">
                <ScrollArrow aria-label="Scroll up"><Triangle d="M0 7L4.500 2L9 7z" /></ScrollArrow>
                <Track $axis="y"><Thumb $axis="y" /></Track>
                <ScrollArrow aria-label="Scroll down"><Triangle d="M0 2L4.500 7L9 2z" /></ScrollArrow>
              </ScrollBar>
              <ScrollBar $axis="x">
                <ScrollArrow aria-label="Scroll left"><Triangle d="M6 0L2 4.500L6 9z" /></ScrollArrow>
                <Track $axis="x"><Thumb $axis="x" /></Track>
                <ScrollArrow aria-label="Scroll right"><Triangle d="M3 0L7 4.500L3 9z" /></ScrollArrow>
              </ScrollBar>
              <Corner />
            </CanvasFrame>
          </DocArea>
        </Work>

        <StatusBar>
          <Coord $width={25}>X:</Coord>
          <Coord $width={50} $right>12.974</Coord>
          <Coord $width={37} $right>Y:</Coord>
          <Coord $width={66} $right>19.871</Coord>
          <EnterButton>Enter...</EnterButton>
          <Message $width={105}>Unconnected: 17</Message>
          <Message $width={101}>Errors: 0</Message>
          <Message>Enter next point of road polyline</Message>
          <StatusButton aria-label="Animation"><FilmIcon /></StatusButton>
          <StatusButton aria-label="Server"><GlobeIcon /></StatusButton>
          <Check>✓</Check>
          <StatusButton aria-label="Cloud storage"><BlueCloudIcon /></StatusButton>
          <Check>✓</Check>
          <StatusButton aria-label="Library"><BooksIcon /></StatusButton>
          <Check>✓</Check>
          <SizeGrip />
        </StatusBar>
      </Window>
    </>
  );
}
